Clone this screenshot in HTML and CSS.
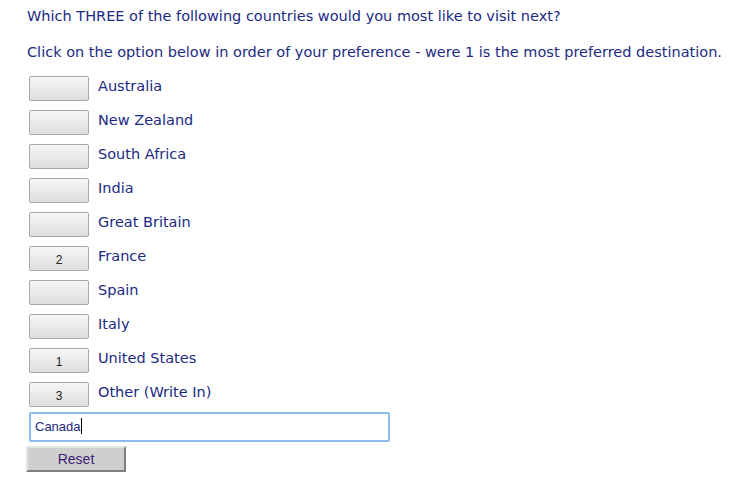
FILE: index.html
```html
<!DOCTYPE html>
<html lang="en">
<head>
    <meta charset="UTF-8">
    <meta name="viewport" content="width=device-width, initial-scale=1.0">
    <title>Country Preference</title>
    <link rel="stylesheet" href="styles.css">
</head>
<body>
    <div class="question">
        <p class="question-text">Which THREE of the following countries would you most like to visit next?</p>
        <p class="question-help">Click on the option below in order of your preference - were 1 is the most preferred destination.</p>

        <div class="options">
            <div class="option"><span class="rank"></span><span class="label">Australia</span></div>
            <div class="option"><span class="rank"></span><span class="label">New Zealand</span></div>
            <div class="option"><span class="rank"></span><span class="label">South Africa</span></div>
            <div class="option"><span class="rank"></span><span class="label">India</span></div>
            <div class="option"><span class="rank"></span><span class="label">Great Britain</span></div>
            <div class="option"><span class="rank">2</span><span class="label">France</span></div>
            <div class="option"><span class="rank"></span><span class="label">Spain</span></div>
            <div class="option"><span class="rank"></span><span class="label">Italy</span></div>
            <div class="option"><span class="rank">1</span><span class="label">United States</span></div>
            <div class="option"><span class="rank">3</span><span class="label">Other (Write In)</span></div>
        </div>

        <div class="write-in">Canada<span class="caret"></span></div>
        <button class="reset">Reset</button>
    </div>
</body>
</html>
```

FILE: styles.css
```css
body {
    margin: 0;
    padding: 7px 0 0 27px;
    font-family: 'DejaVu Sans', Verdana, sans-serif;
    color: #1b2a83;
    background: #fff;
}
.question-text,
.question-help {
    margin: 0;
    font-size: 14.5px;
    line-height: 18px;
}
.question-help {
    margin-top: 18px;
}
.options {
    margin-top: 15px;
    padding-left: 2px;
}
.option {
    display: flex;
    align-items: flex-start;
    gap: 9px;
    height: 34px;
}
.option:last-child {
    height: 30px;
}
.rank {
    box-sizing: border-box;
    width: 60px;
    height: 25px;
    border: 1px solid #a8a8a8;
    border-radius: 2px;
    background: linear-gradient(#f6f6f6, #dedede);
    font-family: 'Liberation Sans', Arial, sans-serif;
    font-size: 12px;
    color: #222;
    text-align: center;
    line-height: 26px;
}
.label {
    font-size: 14.5px;
    line-height: 20px;
}
.write-in {
    box-sizing: border-box;
    width: 361px;
    height: 30px;
    margin-left: 2px;
    padding: 0 4px;
    border: 2px solid #8dbcee;
    border-radius: 2px;
    font-family: 'Liberation Sans', Arial, sans-serif;
    font-size: 13px;
    line-height: 26px;
    color: #1b2a83;
}
.caret {
    display: inline-block;
    width: 1px;
    height: 16px;
    background: #000;
    vertical-align: -3px;
}
.reset {
    display: block;
    width: 100px;
    height: 26px;
    margin-top: 4px;
    margin-left: -1px;
    padding: 0;
    border: 2px solid;
    border-color: #e4e4e4 #808080 #808080 #e4e4e4;
    background: #cfcfcf;
    font-family: 'Liberation Sans', Arial, sans-serif;
    font-size: 14px;
    color: #3b1f72;
    cursor: pointer;
}
```
